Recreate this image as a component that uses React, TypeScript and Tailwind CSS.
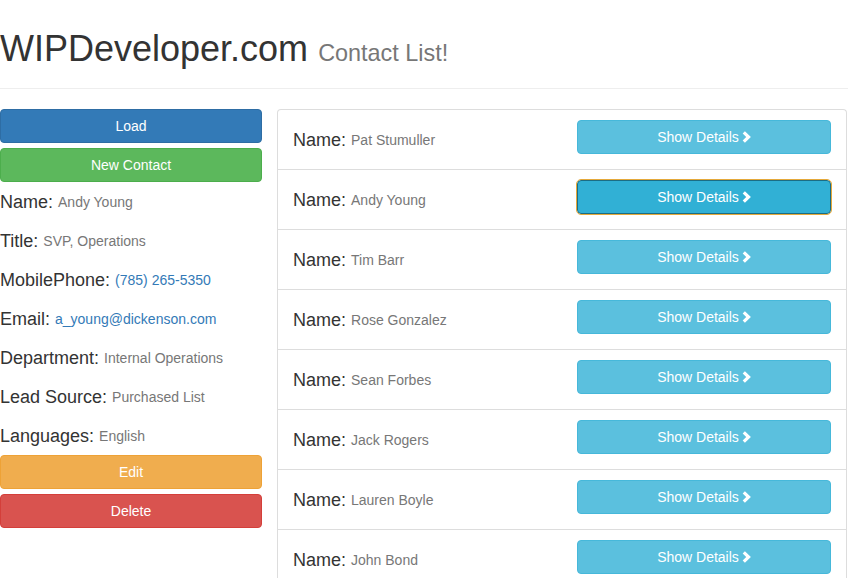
import React from "react";

const Chevron = () => (
  <svg width="9" height="12" viewBox="0 0 9 12" className="inline-block ml-[3px] -mt-[2px] align-middle">
    <path d="M1.8 1.3 L6.6 6 L1.8 10.7" fill="none" stroke="#fff" strokeWidth="3.2" strokeLinejoin="miter" />
  </svg>
);

const fields: { label: string; value: string; link?: boolean }[] = [
  { label: "Name:", value: "Andy Young" },
  { label: "Title:", value: "SVP, Operations" },
  { label: "MobilePhone:", value: "(785) 265-5350", link: true },
  { label: "Email:", value: "a_young@dickenson.com", link: true },
  { label: "Department:", value: "Internal Operations" },
  { label: "Lead Source:", value: "Purchased List" },
  { label: "Languages:", value: "English" },
];

const contacts = [
  "Pat Stumuller",
  "Andy Young",
  "Tim Barr",
  "Rose Gonzalez",
  "Sean Forbes",
  "Jack Rogers",
  "Lauren Boyle",
  "John Bond",
];

const btn = "h-[34px] w-full rounded-[4px] border text-white text-[14px] pt-[2px]";

export default function App() {
  return (
    <div className="font-['Liberation_Sans',Arial,sans-serif] text-[#333] text-[14px] leading-[1.42857] w-[848px] h-[578px] overflow-hidden bg-white">
      <div className="pt-[29px] pb-[9px] mb-[20px] border-b border-[#eee]">
        <h1 className="text-[36px] leading-[1.1] mb-[10px] font-normal">
          WIPDeveloper.com{" "}
          <span className="text-[23.4px] text-[#777]">Contact List!</span>
        </h1>
      </div>
      <div className="flex gap-[15px]">
        <div className="w-[262px] shrink-0 flex flex-col">
          <button className={btn + " border-[#2e6da4] bg-[#337ab7]"}>Load</button>
          <button className={btn + " mt-[5px] border-[#4cae4c] bg-[#5cb85c]"}>New Contact</button>
          {fields.map((f) => (
            <div key={f.label} className="h-[39px] pt-[4px] flex items-center whitespace-nowrap">
              <span className="text-[18px] leading-[1.1]">{f.label}</span>
              <span className={"ml-[5px] text-[14px] leading-[1.1] " + (f.link ? "text-[#337ab7]" : "text-[#777]")}>
                {f.value}
              </span>
            </div>
          ))}
          <button className={btn + " border-[#eea236] bg-[#f0ad4e]"}>Edit</button>
          <button className={btn + " mt-[5px] border-[#d43f3a] bg-[#d9534f]"}>Delete</button>
        </div>
        <div className="w-[570px] shrink-0 border border-[#ddd] rounded-t-[4px] border-b-0">
          {contacts.map((c, i) => (
            <div
              key={c}
              className="h-[60px] border-b border-[#ddd] px-[15px] grid grid-cols-2 gap-[30px]"
            >
              <div className="flex items-center pt-[4px] whitespace-nowrap">
                <span className="text-[18px] leading-[1.1]">Name:</span>
                <span className="ml-[5px] text-[14px] leading-[1.1] text-[#777]">{c}</span>
              </div>
              <div className="pt-[10px]">
                {i === 1 ? (
                  <button className={btn + " border-[#1b6d85] bg-[#31b0d5] outline outline-1 outline-[#e5a93b]"}>
                    Show Details
                    <Chevron />
                  </button>
                ) : (
                  <button className={btn + " border-[#46b8da] bg-[#5bc0de]"}>
                    Show Details
                    <Chevron />
                  </button>
                )}
              </div>
            </div>
          ))}
        </div>
      </div>
    </div>
  );
}
